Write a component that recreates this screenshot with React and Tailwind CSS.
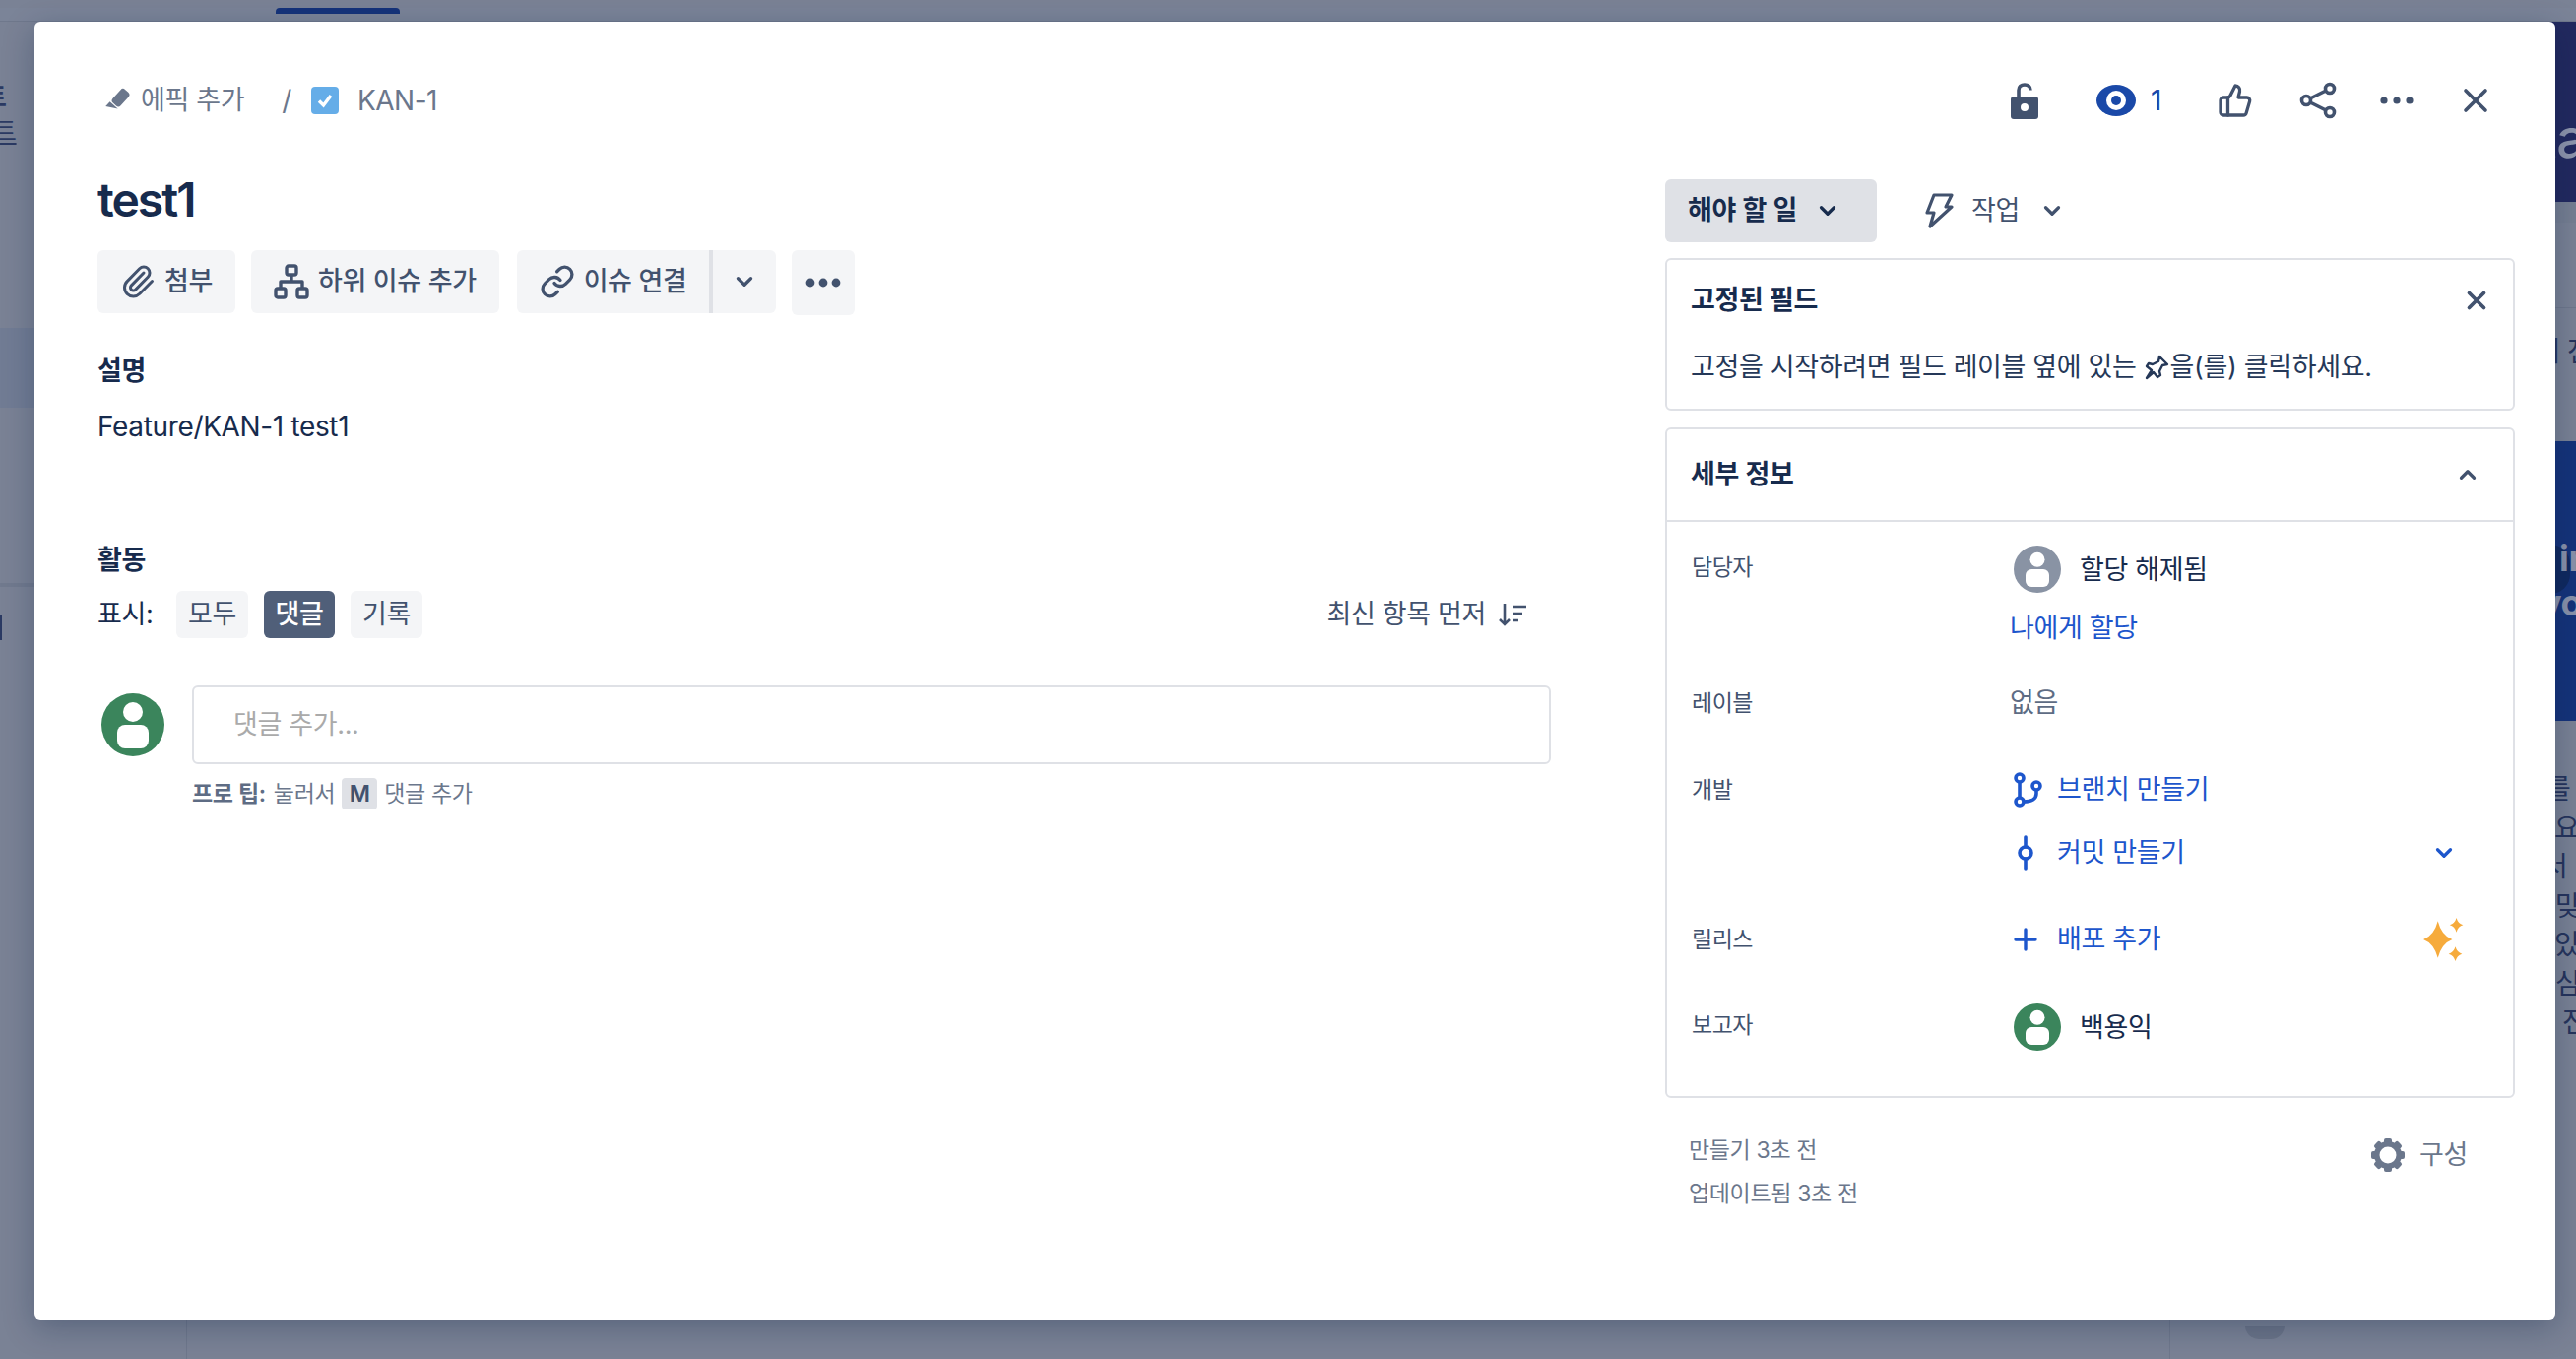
import React from 'react';
import { ChevronDown, ChevronUp, Link, Paperclip, ThumbsUp, X } from 'lucide-react';

const Avatar = ({ size, color }) => (
  <svg width={size} height={size} viewBox="0 0 32 32" className="shrink-0">
    <circle cx="16" cy="16" r="16" fill={color} />
    <ellipse cx="16" cy="9.500" rx="5" ry="5" fill="#fff" />
    <rect x="8" y="16" width="16" height="12" rx="4" fill="#fff" />
  </svg>
);

const ToolButton = ({ icon, children, className = '' }) => (
  <button className={`h-16 flex items-center gap-[9px] pl-[23px] pr-[23px] bg-[#f4f5f7] rounded-md text-[#42526e] font-medium ${className}`}>
    {icon}
    {children}
  </button>
);

const Chip = ({ active, children }) => (
  <button className={active ? 'h-12 w-[72px] rounded-md bg-[#505f79] text-white font-medium' : 'h-12 w-[73px] rounded-md bg-[#f4f5f7] text-[#42526e]'}>
    {children}
  </button>
);

const Dots = ({ r = 4, color = '#42526e' }) => (
  <svg width="40" height="12" viewBox="0 0 40 12">
    <circle cx="7" cy="6" r={r} fill={color} />
    <circle cx="20" cy="6" r={r} fill={color} />
    <circle cx="33" cy="6" r={r} fill={color} />
  </svg>
);

const SubtaskIcon = () => (
  <svg width="36" height="36" viewBox="0 0 36 36" fill="none" stroke="#42526e" strokeWidth="3.400" strokeLinejoin="round">
    <rect x="13" y="2" width="10" height="9" rx="2" />
    <rect x="2" y="25" width="10" height="9" rx="2" />
    <rect x="24" y="25" width="10" height="9" rx="2" />
    <path d="M18 11v7M7 25v-7h22v7" />
  </svg>
);

const BranchIcon = () => (
  <svg width="32" height="36" viewBox="0 0 32 36" fill="none" stroke="#1d56cc" strokeWidth="3.600">
    <circle cx="8" cy="6" r="4" />
    <circle cx="8" cy="30" r="4" />
    <circle cx="25" cy="14" r="4" />
    <path d="M8 10v16M25 18v4c0 5-5 8-13 8" />
  </svg>
);

const CommitIcon = () => (
  <svg width="20" height="36" viewBox="0 0 20 36" fill="none" stroke="#1d56cc" strokeWidth="3.600" strokeLinecap="round">
    <circle cx="10" cy="18" r="6" />
    <path d="M10 2v10M10 24v10" />
  </svg>
);

const Sparkles = () => (
  <svg width="44" height="44" viewBox="0 0 42 42" fill="#f6ab3c">
    <path d="M15 3Q18.500 17 29 21Q18.500 25 15 39Q11.500 25 1 21Q11.500 17 15 3z" />
    <path d="M33 0Q34.500 5.500 39.500 7Q34.500 8.500 33 14Q31.500 8.500 26.500 7Q31.500 5.500 33 0z" />
    <path d="M32 28Q33.500 33.500 38.500 35Q33.500 36.500 32 42Q30.500 36.500 25.500 35Q30.500 33.500 32 28z" />
  </svg>
);

const GearIcon = () => (
  <svg width="36" height="36" viewBox="0 0 36 36" fill="none">
    <g fill="#6b778c">
      <rect x="14" y="1" width="8" height="34" rx="2" />
      <rect x="14" y="1" width="8" height="34" rx="2" transform="rotate(45 18 18)" />
      <rect x="14" y="1" width="8" height="34" rx="2" transform="rotate(90 18 18)" />
      <rect x="14" y="1" width="8" height="34" rx="2" transform="rotate(135 18 18)" />
      <circle cx="18" cy="18" r="14" />
    </g>
    <circle cx="18" cy="18" r="8.500" fill="#fff" />
  </svg>
);

const Row = ({ label, className, children }) => (
  <div className={`flex ${className}`}>
    <div className="w-[325px] pl-[25px] text-[23px] tracking-[-0.5px] leading-10 text-[#42526e] shrink-0">{label}</div>
    <div className="ml-[23px] flex-1 min-w-0">{children}</div>
  </div>
);

const BgText = ({ className, children }) => (
  <div className={`whitespace-nowrap ${className}`}>{children}</div>
);

export default function App() {
  return (
    <div className="relative h-[1380px] w-[2616px] overflow-hidden bg-[#7a8295] text-[27px] tracking-[-0.35px] text-[#172b4d] [font-family:Inter,'Noto_Sans_CJK_KR',sans-serif]">
      {/* page behind the dialog */}
      <div className="h-[14px] border-b border-[#6f788c] bg-[#7b8498] pl-[280px]">
        <div className="mt-[8px] h-[6px] w-[126px] rounded-t-sm bg-[#15337a]" />
      </div>
      <div className="flex h-[1366px]">
        <aside className="w-[190px] shrink-0 border-r border-[#6f788c] text-[#2b3a63]">
          <div className="h-[311px] pt-[62px]">
            <div className="-ml-[17px] text-[26px] font-bold leading-[30px]">트</div>
            <div className="-ml-[7px] mt-[5px] text-[26px] leading-[30px] underline">트</div>
          </div>
          <div className="h-[81px] bg-[#717c94]" />
          <div className="h-[182px] border-b-4 border-[#717a8e]" />
          <div className="mt-[29px] h-[25px] w-[2px] bg-[#2b3a63]" />
        </aside>
        <main className="flex-1 border-r border-[#6f788c]" />
        <aside className="w-[412px] shrink-0 text-[#26345c]">
          <div className="h-[183px] bg-[#22295f] pt-[89px] text-[54px] leading-[60px] font-medium text-[#8f96ad]">
            <BgText className="pl-[374px]">ta</BgText>
          </div>
          <div className="h-[21px] bg-[#767f92]" />
          <div className="h-[87px] border-b border-[#6f788c]" />
          <div className="h-[135px] pt-[26px] text-[28px] leading-9">
            <BgText className="pl-[370px]">세 전</BgText>
          </div>
          <div className="relative h-[284px] bg-[#15337a] pt-[97px] text-[36px] leading-[45px] font-bold text-[#8a93ab]">
            <div className="absolute left-[366px] top-[105px] h-[50px] w-[40px] rounded-full bg-[#10295f]" />
            <BgText className="relative pl-[395px]">in</BgText>
            <BgText className="relative pl-[376px]">vo</BgText>
          </div>
          <div className="pt-[50px] text-[28px] leading-[39.500px]">
            <BgText className="pl-[381px]">를 트</BgText>
            <BgText className="pl-[390px]">요.</BgText>
            <BgText className="pl-[378px]">서</BgText>
            <BgText className="pl-[391px]">맞</BgText>
            <BgText className="pl-[390px]">있</BgText>
            <BgText className="pl-[391px]">심</BgText>
            <BgText className="pl-[398px]">전</BgText>
          </div>
          <div className="mt-[287px] ml-[76px] h-[14px] w-[40px] rounded-b-full bg-[#6b7488]" />
          <div className="ml-[40px] mt-[24px] h-px bg-[#6f788c]" />
        </aside>
      </div>

      {/* dialog */}
      <div className="absolute left-[35px] top-[22px] flex h-[1318px] w-[2560px] flex-col rounded-md bg-white pl-[64px] pr-[41px] pt-[48px] shadow-[0_8px_32px_rgba(9,30,66,0.3)]">
        <header className="flex h-[62px] items-center justify-between pt-[2px]">
          <div className="flex items-center text-[#6b778c]">
            <svg width="26" height="26" viewBox="0 0 24 24" className="ml-[8px]" fill="#6b778c">
              <g transform="rotate(42 12 12)">
                <rect x="7" y="0" width="10" height="17" rx="3" />
                <path d="M7 18h10l-10 6z" />
              </g>
            </svg>
            <span className="ml-[10px]">에픽 추가</span>
            <span className="ml-[38px] text-[28px]">/</span>
            <svg width="28" height="28" viewBox="0 0 28 28" className="ml-[20px]">
              <rect width="28" height="28" rx="4" fill="#65ade8" />
              <path d="M8 14.500l4.500 4.500L20 9" fill="none" stroke="#fff" strokeWidth="3.400" />
            </svg>
            <span className="ml-[19px] text-[28px] tracking-[-0.5px] [font-family:Inter,sans-serif]">KAN-1</span>
          </div>
          <div className="flex items-center text-[#42526e]">
            <svg width="28" height="38" viewBox="0 0 28 38">
              <path d="M8 16V8.500C8 5 10.500 3 14 3s6 2 6 5.500" fill="none" stroke="#42526e" strokeWidth="3.600" />
              <rect y="15" width="28" height="23" rx="3" fill="#42526e" />
              <circle cx="14" cy="26" r="4" fill="#fff" />
            </svg>
            <svg width="40" height="32" viewBox="0 0 40 32" className="ml-[59px]">
              <ellipse cx="20" cy="16" rx="20" ry="16" fill="#1a49a8" />
              <circle cx="20" cy="16" r="10" fill="#fff" />
              <circle cx="20" cy="16" r="5" fill="#1a49a8" />
            </svg>
            <span className="ml-[15px] text-[28px] text-[#1a49a8]">1</span>
            <ThumbsUp size={36} strokeWidth={2.200} className="ml-[57px]" />
            <svg width="38" height="38" viewBox="0 0 38 38" fill="none" stroke="#42526e" strokeWidth="3.600" className="ml-[47px]">
              <circle cx="7" cy="19" r="4.500" />
              <circle cx="31" cy="7" r="4.500" />
              <circle cx="31" cy="31" r="4.500" />
              <path d="M11 17l16-8M11 21l16 8" />
            </svg>
            <div className="ml-[41px]"><Dots r={3.600} /></div>
            <X size={40} strokeWidth={2.200} className="ml-[40px] mr-[20px]" />
          </div>
        </header>

        <div className="mt-[40px] flex">
          <section className="w-[1476px] shrink-0">
            <h1 className="h-[62px] text-[48px] font-semibold leading-[62px] tracking-[-2px] [font-family:Inter,sans-serif]">test1</h1>
            <div className="mt-[20px] flex items-start gap-4">
              <ToolButton icon={<Paperclip size={36} strokeWidth={2} />}>첨부</ToolButton>
              <ToolButton icon={<SubtaskIcon />}>하위 이슈 추가</ToolButton>
              <div className="ml-[2px] flex">
                <ToolButton icon={<Link size={36} strokeWidth={2.200} />} className="rounded-r-none">이슈 연결</ToolButton>
                <button className="flex h-16 w-[68px] items-center justify-center rounded-r-md border-l-4 border-[#dfe1e6] bg-[#f4f5f7] text-[#42526e]">
                  <ChevronDown size={26} strokeWidth={3} />
                </button>
              </div>
              <button className="flex h-[66px] w-16 items-center justify-center rounded-md bg-[#f4f5f7]"><Dots r={4.400} /></button>
            </div>
            <h2 className="mt-[37px] font-semibold leading-10">설명</h2>
            <p className="mt-[16px] text-[28px] leading-10 [font-family:Inter,sans-serif]">Feature/KAN-1 test1</p>
            <h2 className="mt-[96px] font-semibold leading-10">활동</h2>
            <div className="mt-[11px] flex h-12 items-center">
              <span className="w-[80px]">표시:</span>
              <div className="flex gap-4">
                <Chip>모두</Chip>
                <Chip active>댓글</Chip>
                <Chip>기록</Chip>
              </div>
              <div className="ml-auto flex items-center gap-3 pr-[24px] text-[#42526e]">
                최신 항목 먼저
                <svg width="30" height="28" viewBox="0 0 30 28" fill="none" stroke="#42526e" strokeWidth="2.600">
                  <path d="M7 3v21M2 19l5 5 5-5M16 6h13M16 13h9M16 20h5" />
                </svg>
              </div>
            </div>
            <div className="mt-12 flex">
              <div className="ml-[4px] mt-2"><Avatar size={64} color="#3b855c" /></div>
              <div className="ml-[28px] flex h-20 flex-1 items-center rounded-md border-2 border-[#dfe1e6] pl-[40px] text-[#aaaaaa]">댓글 추가...</div>
            </div>
            <div className="mt-[14px] flex h-8 items-center pl-[96px] text-[23px] text-[#6b778c]">
              <strong className="font-semibold text-[#5e6c84]">프로 팁:</strong>
              <span className="ml-[8px]">눌러서</span>
              <span className="mx-[7px] flex h-8 w-[36px] items-center justify-center rounded bg-[#dfe1e6] font-semibold text-[#42526e]">M</span>
              <span>댓글 추가</span>
            </div>
          </section>

          <section className="ml-[116px] flex-1 pt-[10px]">
            <div className="flex h-16 items-center">
              <button className="flex h-16 w-[215px] items-center justify-start gap-[18px] rounded-md bg-[#dfe1e6] pl-[23px] font-semibold text-[#172b4d]">
                해야 할 일
                <ChevronDown size={26} strokeWidth={3} />
              </button>
              <div className="ml-[48px] flex items-center text-[#42526e]">
                <svg width="30" height="38" viewBox="0 0 30 38" fill="none" stroke="#42526e" strokeWidth="3.200" strokeLinejoin="round">
                  <path d="M10 3h18l-6 12h6L6 35l4-14H3z" />
                </svg>
                <span className="ml-[18px]">작업</span>
                <ChevronDown size={26} strokeWidth={3} className="ml-[20px]" />
              </div>
            </div>

            <div className="mt-4 h-[155px] rounded-md border-2 border-[#dfe1e6] px-[24px]">
              <div className="flex h-[82px] items-center justify-between">
                <span className="font-semibold">고정된 필드</span>
                <X size={30} strokeWidth={3} className="-mr-[2px] text-[#42526e]" />
              </div>
              <div className="mt-[7px] flex items-center text-[#253858]">
                고정을 시작하려면 필드 레이블 옆에 있는
                <svg width="28" height="28" viewBox="0 0 28 28" fill="none" stroke="#253858" strokeWidth="2.400" strokeLinejoin="round" className="ml-[6px]">
                  <path d="M17 3l8 8-5 1-3 6 1 4-3 2-4-5-7 6 5-8-5-4 2-3 4 1 6-3z" />
                </svg>
                을(를) 클릭하세요.
              </div>
            </div>

            <div className="mt-[17px] h-[681px] rounded-md border-2 border-[#dfe1e6]">
              <div className="flex h-[94px] items-center justify-between border-b-2 border-[#dfe1e6] pl-[24px] pr-[33px]">
                <span className="font-semibold">세부 정보</span>
                <ChevronUp size={26} strokeWidth={3} className="text-[#42526e]" />
              </div>
              <Row label="담당자" className="pt-[26px]">
                <div className="flex items-center pl-[4px]">
                  <div className="-mt-[2px]"><Avatar size={48} color="#8993a4" /></div>
                  <span className="ml-[19px]">할당 해제됨</span>
                </div>
                <div className="mt-[16px] leading-10 text-[#1d56cc]">나에게 할당</div>
              </Row>
              <Row label="레이블" className="pt-[36px]">
                <div className="leading-10 text-[#5e6c84]">없음</div>
              </Row>
              <Row label="개발" className="pt-[48px]">
                <div className="flex h-10 items-center pl-[2px] text-[#1d56cc]">
                  <BranchIcon />
                  <span className="ml-[14px]">브랜치 만들기</span>
                </div>
                <div className="mt-[24px] flex h-10 items-center pl-[6px] pr-[57px] text-[#1d56cc]">
                  <CommitIcon />
                  <span className="ml-[22px]">커밋 만들기</span>
                  <ChevronDown size={26} strokeWidth={3} className="ml-auto" />
                </div>
              </Row>
              <Row label="릴리스" className="pt-[48px]">
                <div className="flex h-10 items-center pl-[4px] pr-[48px] text-[#1d56cc]">
                  <svg width="24" height="24" viewBox="0 0 24 24" fill="none" stroke="#1d56cc" strokeWidth="3.400" strokeLinecap="round">
                    <path d="M12 2v20M2 12h20" />
                  </svg>
                  <span className="ml-[20px]">배포 추가</span>
                  <div className="ml-auto"><Sparkles /></div>
                </div>
              </Row>
              <Row label="보고자" className="pt-[47px]">
                <div className="flex items-center pl-[4px]">
                  <div className="-mt-[2px]"><Avatar size={48} color="#3b855c" /></div>
                  <span className="ml-[19px]">백용익</span>
                </div>
              </Row>
            </div>

            <div className="mt-[31px] flex justify-between pl-[24px] pr-[48px] text-[23px] text-[#6b778c]">
              <div className="leading-[44px]">
                <div>만들기 3초 전</div>
                <div>업데이트됨 3초 전</div>
              </div>
              <div className="mt-[3px] flex h-12 items-center gap-[14px] text-[27px]">
                <GearIcon />
                구성
              </div>
            </div>
          </section>
        </div>
      </div>
    </div>
  );
}
